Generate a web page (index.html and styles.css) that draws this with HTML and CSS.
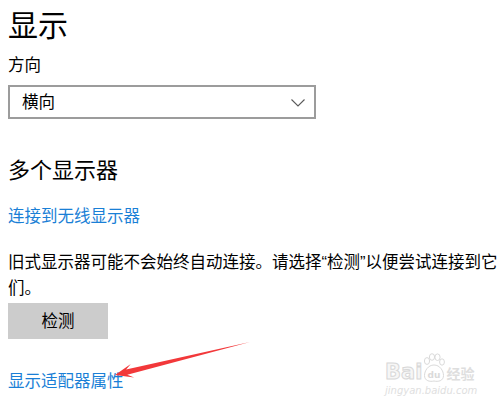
FILE: index.html
```html
<!DOCTYPE html>
<html lang="zh-CN">
<head>
<meta charset="utf-8">
<title>显示</title>
<link rel="stylesheet" href="styles.css">
</head>
<body>
<div class="page">
  <h1 class="title">显示</h1>
  <div class="label">方向</div>
  <div class="select">
    <span class="select-value">横向</span>
    <svg class="chevron" width="14" height="8" viewBox="0 0 14 8"><polyline points="0.5,0.5 7,7 13.5,0.5" fill="none" stroke="#5a5a5a" stroke-width="1.1"/></svg>
  </div>
  <h2 class="subtitle">多个显示器</h2>
  <a class="link link-wireless" href="#">连接到无线显示器</a>
  <p class="desc">旧式显示器可能不会始终自动连接。请选择“检测”以便尝试连接到它们。</p>
  <button class="btn" type="button">检测</button>
  <a class="link link-adapter" href="#">显示适配器属性</a>

  <svg class="arrow" width="503" height="409" viewBox="0 0 503 409">
    <polygon points="250,342 126.1,369.6 130.8,363.9 115,375 134.2,377.5 127.3,374.8" fill="#f2383a"/>
  </svg>

  <div class="watermark">
    <div class="wm-row">
      <span class="wm-bai">Bai</span>
      <svg class="wm-paw" width="22" height="30" viewBox="0 0 22 30">
        <g fill="none" stroke="#dadada" stroke-width="1">
          <ellipse cx="4" cy="8" rx="2.6" ry="3.4"/>
          <ellipse cx="9" cy="4" rx="2.6" ry="3.3"/>
          <ellipse cx="14.5" cy="4.2" rx="2.6" ry="3.3"/>
          <ellipse cx="19" cy="9" rx="2.4" ry="3.2"/>
          <path d="M11 12 C5 12 1.5 18 1.5 22.5 C1.5 28 7 29 11 28 C15 29 20.5 28 20.5 22.5 C20.5 18 17 12 11 12 Z"/>
        </g>
        <text x="11" y="25" text-anchor="middle" class="wm-du">du</text>
      </svg>
      <span class="wm-jy">经验</span>
    </div>
    <div class="wm-url">jingyan.baidu.com</div>
  </div>
</div>
</body>
</html>
```

FILE: styles.css
```css
html, body {
  margin: 0;
  padding: 0;
  background: #ffffff;
}

body {
  width: 503px;
  height: 409px;
  overflow: hidden;
  font-family: "Liberation Sans", "Noto Sans CJK SC", sans-serif;
  color: #000000;
}

.page {
  position: relative;
  width: 503px;
  height: 409px;
  box-sizing: border-box;
  padding: 6px 0 0 8px;
}

.title {
  margin: 0;
  font-size: 30px;
  line-height: 40px;
  font-weight: 400;
}

.label {
  margin-top: 8px;
  font-size: 16.5px;
  line-height: 22px;
}

.select {
  margin-top: 9px;
  width: 308px;
  height: 34px;
  box-sizing: border-box;
  border: 2px solid #9c9c9c;
  display: flex;
  align-items: center;
  justify-content: space-between;
  padding: 0 9px 0 12px;
}

.select-value {
  font-size: 16.5px;
  line-height: 22px;
}

.chevron {
  display: block;
  margin-top: 1px;
}

.subtitle {
  margin: 37px 0 0 0;
  font-size: 22px;
  line-height: 30px;
  font-weight: 400;
}

.link {
  display: block;
  width: fit-content;
  color: #1a7fd6;
  text-decoration: none;
  font-size: 16.5px;
  line-height: 22px;
}

.link-wireless {
  margin-top: 19px;
}

.desc {
  margin: 22px 0 0 0;
  font-size: 16.5px;
  line-height: 26px;
}

.btn {
  display: block;
  margin-top: 2px;
  width: 100px;
  height: 36px;
  border: none;
  background: #cccccc;
  color: #000000;
  font-family: inherit;
  font-size: 16.5px;
  line-height: 22px;
  padding: 0;
}

.link-adapter {
  margin-top: 31px;
}

.arrow {
  position: absolute;
  left: 0;
  top: 0;
  pointer-events: none;
}

.watermark {
  position: absolute;
  left: 385px;
  top: 353px;
  color: #e4e4e4;
}

.wm-row {
  display: flex;
  align-items: flex-end;
  gap: 1px;
}

.wm-bai {
  font-family: "DejaVu Sans", sans-serif;
  font-weight: 700;
  font-size: 21px;
  line-height: 22px;
  color: #f6f6f6;
  -webkit-text-stroke: 1px #d8d8d8;
}

.wm-paw {
  display: block;
}

.wm-du {
  font-family: "DejaVu Sans", sans-serif;
  font-size: 9px;
  font-weight: 700;
  fill: #dadada;
}

.wm-jy {
  font-family: "Noto Sans CJK SC", sans-serif;
  font-size: 14px;
  line-height: 20px;
  color: #dedede;
  font-weight: 700;
}

.wm-url {
  font-family: "DejaVu Sans", sans-serif;
  font-size: 10px;
  line-height: 12px;
  margin-top: 2px;
  color: #e0e0e0;
  font-style: italic;
}
```
